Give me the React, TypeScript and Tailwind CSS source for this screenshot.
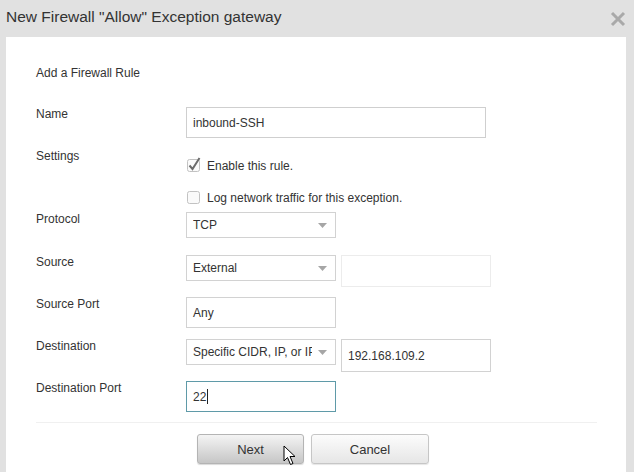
import React from 'react';

function Row({ label, height, children }: { label: string; height: string; children?: React.ReactNode }) {
  return (
    <div className={`flex ${height}`}>
      <div className="w-[150px] shrink-0 text-[12px] leading-[14px]">{label}</div>
      <div className="flex-1">{children}</div>
    </div>
  );
}

function Caret() {
  return (
    <svg width="9" height="5" viewBox="0 0 9 5" className="shrink-0">
      <path d="M0 0 L9 0 L4.5 5 Z" fill="#a6a6a6" />
    </svg>
  );
}

function Select({ value }: { value: string }) {
  return (
    <div className="w-[150px] h-[26px] border border-[#d2d2d2] bg-white flex items-center pl-[6px] pr-[8px] gap-[6px]">
      <span className="flex-1 min-w-0 overflow-hidden whitespace-nowrap text-[12px]">{value}</span>
      <Caret />
    </div>
  );
}

function Input({ value, width = 'w-[150px]', border = 'border-[#d2d2d2]', height = 'h-[31px]', children }: {
  value?: string;
  width?: string;
  border?: string;
  height?: string;
  children?: React.ReactNode;
}) {
  return (
    <div className={`${width} ${height} border ${border} bg-white flex items-center px-[6px] text-[12px]`}>
      {value}
      {children}
    </div>
  );
}

function Checkbox({ checked, label }: { checked?: boolean; label: string }) {
  return (
    <div className="flex items-center h-[13px] ml-[1px]">
      <svg width="14" height="14" viewBox="0 0 14 14" className="shrink-0 overflow-visible">
        <rect x="0.5" y="0.5" width="12" height="12" rx="2" fill="#fafafa" stroke="#c2c2c2" />
        {checked && <path d="M2.5 6.5 L5.5 10 L12.5 -1" fill="none" stroke="#6b6b6b" strokeWidth="2" />}
      </svg>
      <span className="ml-[6px] text-[12px] leading-[14px]">{label}</span>
    </div>
  );
}

export default function App() {
  return (
    <div className="w-[634px] h-[472px] bg-[#e1e1e1] flex flex-col font-['Liberation_Sans',Arial,sans-serif] text-[#333] overflow-hidden">
      {/* Title bar */}
      <div className="h-[37px] shrink-0 flex items-center justify-between pl-[6px] pr-[8px] pb-[3px]">
        <span className="text-[15.5px] text-[#333]">New Firewall "Allow" Exception gateway</span>
        <svg width="16" height="16" viewBox="0 0 16 16" className="mt-[3px]">
          <path d="M2 2 L14 14 M14 2 L2 14" stroke="#a9a9a9" strokeWidth="3" />
        </svg>
      </div>

      {/* Body */}
      <div className="flex-1 ml-[6px] w-[620px] bg-white pl-[30px] relative">
        <div className="pt-[29px] text-[12px] leading-[14px]">Add a Firewall Rule</div>

        <div className="mt-[27px]">
          <Row label="Name" height="h-[42px]">
            <Input value="inbound-SSH" width="w-[300px]" border="border-[#cfcfcf]" />
          </Row>

          <Row label="Settings" height="h-[63px]">
            <div className="pt-[10px] flex flex-col gap-[19px]">
              <Checkbox checked label="Enable this rule." />
              <Checkbox label="Log network traffic for this exception." />
            </div>
          </Row>

          <Row label="Protocol" height="h-[43px]">
            <Select value="TCP" />
          </Row>

          <Row label="Source" height="h-[42px]">
            <div className="flex gap-[5px]">
              <Select value="External" />
              <Input border="border-[#ececec]" height="h-[32px]" />
            </div>
          </Row>

          <Row label="Source Port" height="h-[42px]">
            <Input value="Any" />
          </Row>

          <Row label="Destination" height="h-[42px]">
            <div className="flex gap-[5px]">
              <Select value="Specific CIDR, IP, or IP range" />
              <Input value="192.168.109.2" height="h-[33px]" />
            </div>
          </Row>

          <Row label="Destination Port" height="h-[41px]">
            <Input value="22" border="border-[#5f9aa8]">
              <span className="inline-block w-px h-[15px] bg-[#222] ml-[1px]" />
            </Input>
          </Row>
        </div>

        <div className="w-[561px] h-px bg-[#f0f0f0]" />

        <div className="mt-[11px] pl-[161px] flex gap-[7px]">
          <button className="w-[107px] h-[30px] rounded-[3px] border border-[#b4b4b4] bg-gradient-to-b from-[#f4f4f4] to-[#c6c6c6] text-[13px] text-[#333] pt-[2px] shadow-[0_1px_1px_rgba(0,0,0,0.15)]">
            Next
          </button>
          <button className="w-[118px] h-[30px] rounded-[3px] border border-[#c6c6c6] bg-gradient-to-b from-[#fcfcfc] to-[#e6e6e6] text-[13px] text-[#333] pt-[2px] shadow-[0_1px_1px_rgba(0,0,0,0.1)]">
            Cancel
          </button>
        </div>

        {/* Mouse pointer */}
        <svg width="14" height="21" viewBox="0 0 14 21" className="absolute left-[277px] top-[408px]">
          <path d="M1 1 L1 16 L4.5 12.5 L7.5 19.5 L10 18.5 L7 11.5 L12 11.5 Z" fill="#fff" stroke="#000" strokeWidth="1" strokeLinejoin="round" />
        </svg>
      </div>
    </div>
  );
}
